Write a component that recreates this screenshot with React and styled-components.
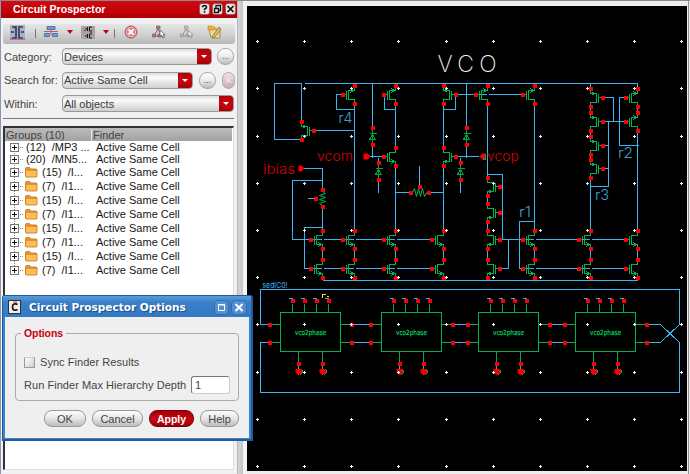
import React from 'react';
import styled, { createGlobalStyle, css } from 'styled-components';

const GlobalStyle = createGlobalStyle`
  * { box-sizing: border-box; }
  body { margin: 0; background: #ececec; font-family: "Liberation Sans", Arial, sans-serif; }
`;

const Screen = styled.main`
  position: relative;
  display: flex;
  width: 690px;
  height: 474px;
  overflow: hidden;
  background: #eeedee;
  border-top: 1px solid #8c8a8c;
  font-size: 11px;
  letter-spacing: 0;
  color: #444;
`;

const Sidebar = styled.aside`
  display: flex;
  flex-direction: column;
  width: 237px;
  border-left: 1px solid #8b98b5;
  background: #f1f1f1;
`;

const TitleBar = styled.header`
  display: flex;
  align-items: center;
  height: 17px;
  padding: 0 1px 2px 12px;
  background: linear-gradient(#d00a10, #c30008 60%, #a80006);
  color: #fff;
  font-weight: bold;
  font-size: 10.5px;
  letter-spacing: 0.05px;
`;

const TitleText = styled.span`
  flex: 1;
  white-space: nowrap;
`;

const TitleIcons = styled.div`
  display: flex;
  gap: 2px;
`;

const ToolBar = styled.div`
  display: flex;
  height: 20px;
  margin: 6px 2px 0 2px;
  border-radius: 3px;
  background: linear-gradient(#e6e6e6, #d2d2d2 50%, #b7b7b7);
`;

const Form = styled.div`
  display: flex;
  flex-direction: column;
  gap: 6.5px;
  padding: 4px 2px 0 3px;
`;

const FormRow = styled.div`
  display: flex;
  align-items: center;
  height: 17px;
`;

const Label = styled.label`
  width: 58px;
  white-space: nowrap;
`;

const Combo = styled.div`
  display: flex;
  align-items: center;
  width: ${(p) => p.$width}px;
  height: 17px;
  padding-left: 1px;
  border: 1px solid #999;
  border-radius: 4px;
  background: linear-gradient(#dedede, #fafafa 30%, #e8e8e8 60%, #cfcfcf);
  overflow: hidden;
  color: #3a3a3a;
  span { flex: 1; }
`;

const ComboArrow = styled.i`
  display: flex;
  align-items: center;
  justify-content: center;
  width: 14px;
  height: 17px;
  background: linear-gradient(#ad0008, #c80610 50%, #a00006);
  &::after {
    content: '';
    border: 3px solid transparent;
    border-top: 3px solid #fff;
    border-bottom: 0;
  }
`;

const RoundButton = styled.button`
  width: ${(p) => p.$width || 17}px;
  height: 17px;
  margin-left: ${(p) => p.$gap}px;
  padding: 0;
  border: 1px solid #aaa;
  border-radius: 8px;
  background: ${(p) => (p.$faded ? 'linear-gradient(#eee2e3, #c7aaae)' : 'linear-gradient(#fff, #eee 45%, #bbb)')};
  color: ${(p) => (p.$faded ? '#f4e6e8' : '#555')};
  font: ${(p) => (p.$faded ? 'bold 11px/14px' : '9px/13px')} "Liberation Sans", Arial, sans-serif;
`;

const Divider = styled.hr`
  width: 231px;
  height: 1px;
  margin: 6px 2px 7px 2px;
  border: 0;
  background: #777;
`;

const Tree = styled.section`
  flex: 1;
  margin: 0 3px 4px 2px;
  border: 1px solid #777;
  border-top: 2px solid #333;
  border-left: 2px solid #333;
  border-right-color: #ddd;
  border-bottom-color: #ddd;
  background: #fff;
  color: #161616;
`;

const TreeHeader = styled.div`
  display: flex;
  align-items: center;
  height: 13px;
  margin-right: 1px;
  background: linear-gradient(#bcbcbc, #a2a2a2);
  color: #444;
`;

const HeaderCell = styled.span`
  width: ${(p) => p.$width}px;
  padding-left: ${(p) => p.$pad}px;
  white-space: nowrap;
  ${(p) => p.$ruled && css`border-left: 1px solid #e8e8e8;`}
`;

const TreeRow = styled.div`
  display: flex;
  align-items: center;
  height: ${(p) => p.$height}px;
  padding-left: 4px;
  white-space: pre;
`;

const GroupText = styled.span`
  width: ${(p) => p.$width}px;
  padding-left: 3px;
`;

const Splitter = styled.div`
  width: 10px;
  border-left: 1px solid #b5b5bb;
  border-right: 4px solid #f5f5f5;
  background: linear-gradient(90deg, #d4d4d9, #c4c4ca);
`;

const CanvasFrame = styled.section`
  width: 442px;
  padding-top: 5px;
  border-right: 1px solid #8f8f8f;
  svg { display: block; }
`;

const Dialog = styled.section`
  position: absolute;
  left: 2px;
  top: 294px;
  display: flex;
  flex-direction: column;
  width: 251px;
  height: 146px;
  border: 1px solid #225a9e;
  border-right-width: 2px;
  border-bottom-width: 2px;
  border-radius: 3px 3px 0 0;
  background: #3c83cc;
`;

const DialogTitle = styled.header`
  display: flex;
  align-items: center;
  height: 21px;
  padding: 1px 5px 0 5px;
  background: linear-gradient(#5b9bd9, #3a80c8 30%, #3379c1);
  color: #fff;
  font: bold 10.5px "DejaVu Sans", sans-serif;
  letter-spacing: 0;
  text-shadow: 1px 1px 1px #1b4c87;
`;

const DialogTitleText = styled.h1`
  flex: 1;
  margin: 0 0 0 7px;
  font: inherit;
  white-space: nowrap;
`;

const WindowButton = styled.svg`
  margin-left: 4px;
  border-radius: 3px;
  background: #568fd0;
  outline: 1px solid #2f6eb4;
`;

const DialogBody = styled.div`
  flex: 1;
  display: flex;
  flex-direction: column;
  margin: 0 2px 1px 2px;
  padding: 15px 10px 0 10px;
  background: #efefef;
`;

const OptionsBox = styled.fieldset`
  display: flex;
  flex-direction: column;
  height: 69px;
  margin: 0;
  padding: 0 8px 0 8px;
  border: 1px solid #aaa;
  border-radius: 4px;
`;

const Legend = styled.legend`
  height: 3px;
  margin-left: -3px;
  padding: 0 3px;
  color: #c8000d;
  font-weight: bold;
  font-size: 10.5px;
  line-height: 3px;
  letter-spacing: -0.1px;
`;

const OptionRow = styled.div`
  display: flex;
  align-items: center;
  height: ${(p) => p.$height}px;
  margin-top: ${(p) => p.$top}px;
  letter-spacing: 0.05px;
  white-space: nowrap;
`;

const CheckBox = styled.i`
  width: 11px;
  height: 11px;
  margin-right: 5px;
  border: 1px solid #999;
  border-top-color: #ccc;
  border-radius: 1px;
  background: linear-gradient(135deg, #fff, #ccc);
`;

const DepthInput = styled.span`
  width: 39px;
  height: 18px;
  margin-left: auto;
  padding: 2px 3px;
  border: 1px solid #ccc;
  border-top: 1px solid #777;
  border-left: 1px solid #777;
  border-radius: 3px;
  background: #fff;
`;

const ButtonRow = styled.div`
  display: flex;
  justify-content: flex-end;
  gap: 6px;
  margin-top: 9px;
`;

const PushButton = styled.button`
  width: ${(p) => p.$width}px;
  height: 17px;
  padding: 0;
  border: 1px solid ${(p) => (p.$primary ? '#7c0006' : '#999')};
  border-radius: 8px;
  background: ${(p) => (p.$primary ? 'linear-gradient(#a00008, #c50812 50%, #a00006)' : 'linear-gradient(#fdfdfd, #e9e9e9 45%, #bdbdbd)')};
  color: ${(p) => (p.$primary ? '#fff' : '#444')};
  font: ${(p) => (p.$primary ? 'bold 10.5px' : '11px')}/14px "Liberation Sans", Arial, sans-serif;
`;

function TitleIcon({ kind }) {
  return (
    <svg width="11" height="12" viewBox="0 0 11 12">
      <rect x="0.5" y="0.5" width="10" height="11" rx="2.5" fill="#e5e5e5" stroke="#8b3b3d" strokeWidth="0.5" />
      {kind === 'help' && <path d="M3.5 4.2Q3.5 2.5 5.5 2.5T7.5 4.2Q7.5 5.2 5.5 6.2V7.3M5.5 8.3V9.8" fill="none" stroke="#111" strokeWidth="1.6" />}
      {kind === 'float' && <path d="M4 5V2.5H8.5V7.5H7M2.5 5.5H6.5V9.5H2.5Z" fill="none" stroke="#111" strokeWidth="1.3" />}
      {kind === 'close' && <path d="M2.5 3L8.5 9M8.5 3L2.5 9" stroke="#111" strokeWidth="1.7" />}
    </svg>
  );
}

function Cursor({ x, y }) {
  return <path transform={`translate(${x} ${y})`} d="M0 0V6.5L1.6 5.2L3 8L4.3 7.3L3 4.8H5.2Z" fill="#fff" stroke="#444" strokeWidth="0.7" />;
}

function ToolIcons() {
  return (
    <svg width="232" height="20" viewBox="3 23 232 20">
      <rect x="10" y="24" width="15" height="15" fill="#a5b3cc" />
      <path d="M12 26H16V37H12M23 26H19V37H23M11 31H14M21 31H24" fill="none" stroke="#2c354e" strokeWidth="1.6" />
      <path d="M12 25L15 28M22 25L19 28M10 38H25" stroke="#b34d5c" />
      <path d="M35.5 28V37M114.5 28V37" stroke="#777" />
      <path d="M44 30.5H58M51 27V34" stroke="#b85b60" />
      <path d="M47 25.5H55V28.5H47ZM44.5 32.5H49.5V35.5H44.5ZM52.5 32.5H57.5V35.5H52.5Z" fill="#7999cf" stroke="#5374ac" />
      <path d="M67 29H73L70 33ZM103 29H109L106 33Z" fill="#c4000c" />
      <rect x="81" y="25" width="14" height="13" fill="#a4a4a4" />
      <path d="M87.5 26V30M89.5 26V30M85 28H87.5M92 26H89.5M92 30H89.5M87.5 33V37M89.5 33V37M85 35H87.5M92 33H89.5M92 37H89.5" stroke="#171717" fill="none" />
      <path d="M84 29.5H86M90 31.5H92" stroke="#f02020" />
      <circle cx="131" cy="31" r="6" fill="#dc7880" stroke="#b84c56" />
      <circle cx="131" cy="31" r="4.7" fill="none" stroke="#f0c8ca" />
      <path d="M128.5 28.5L133.5 33.5M133.5 28.5L128.5 33.5" stroke="#fff" strokeWidth="2" />
      <path d="M158 28L154 35M158 28L162 35M154 35H162" stroke="#665" fill="none" />
      <path d="M156.5 25H160V28H156.5ZM152.5 33H155.5V36H152.5ZM158 33H161V36H158Z" fill="#b5786e" stroke="#7a625c" strokeWidth="0.7" />
      <Cursor x={160} y={29} />
      <g opacity="0.55">
        <path d="M186 28L182 35M186 28L190 35M182 35H190" stroke="#665" fill="none" />
        <path d="M184.5 25H188V28H184.5ZM180.5 33H183.5V36H180.5ZM186 33H189V36H186Z" fill="#b59a96" stroke="#7a6a68" strokeWidth="0.7" />
        <Cursor x={188} y={29} />
      </g>
      <path d="M209 28H220V37H211Z" fill="#eadc9a" stroke="#a39048" />
      <path d="M208 25H212L213 26H215V29H208Z" fill="#f3ae3d" stroke="#c18a30" strokeWidth="0.6" />
      <path d="M212 36L219 26L221 28L214 37Z" fill="#e7c64c" stroke="#66594a" strokeWidth="0.7" />
    </svg>
  );
}

function Expander({ first, last, height }) {
  const c = height / 2;
  return (
    <svg width="14" height={height} viewBox={`0 0 14 ${height}`} shapeRendering="crispEdges">
      <path d={`M5.5 ${first ? c : 0}V${last ? c : height}`} stroke="#777" strokeDasharray="1 1" />
      <path d={`M9 ${c + 0.5}H14`} stroke="#888" strokeDasharray="1 1" />
      <rect x="1.5" y={c - 3.5} width="8" height="8" fill="#fff" stroke="#777" />
      <path d={`M3 ${c + 0.5}H8M5.5 ${c - 2}V${c + 3}`} stroke="#111" />
    </svg>
  );
}

function Folder() {
  return (
    <svg width="16" height="12" viewBox="0 0 15 12">
      <path d="M2 2.5Q2 1.5 3 1.5H6L7.5 3H12.5Q13.5 3 13.5 4V10Q13.5 11 12.5 11H3Q2 11 2 10Z" fill="#e8932c" stroke="#bd7422" strokeWidth="0.8" />
      <path d="M2.6 5H13V9.8Q13 10.5 12 10.5H3.5Q2.6 10.5 2.6 9.8Z" fill="#fbbd58" />
    </svg>
  );
}

const GROUPS = [
  ['(12)  /MP3 ...', false], ['(20)  /MN5...', false],
  ['(15)  /I...', true], ['(7)  /I1...', true], ['(15)  /I...', true], ['(7)  /I1...', true],
  ['(15)  /I...', true], ['(7)  /I1...', true], ['(15)  /I...', true], ['(7)  /I1...', true],
];

const GRID_X = [257, 304, 351, 398, 446, 493, 540, 587, 634, 681];
const GRID_Y = [41, 88, 136, 183, 230, 277, 324, 372, 419, 466];

// x of the channel wire, y of the gate, side of the gate (-1 left, 1 right), arrow at the top or the bottom
const TRANSISTORS = [
  [354, 94, -1, 'p'], [395, 94, -1, 'p'], [443, 94, 1, 'p'], [487, 94, -1, 'p'], [534, 94, -1, 'p'],
  [301, 130, 1, 'p'], [395, 156, -1, 'n'], [443, 156, 1, 'n'],
  ...[97, 121, 145, 168].map((y) => [590, y, 1, 'p']),
  ...[97, 121].map((y) => [637, y, -1, 'p']),
  ...[186, 212, 239, 268].map((y) => [487, y, 1, 'n']),
  ...[322, 354, 395, 443, 534, 590, 637].flatMap((x) => [[x, 239, -1, 'n'], [x, 268, -1, 'n']]),
];

const WIRES = [
  'M301 121V83H274V139H301', 'M304 83H637V277', 'M354 82V280', 'M395 82V280', 'M443 82V280',
  'M487 82V280', 'M534 82V280', 'M590 82V280', 'M322 280H637',
  'M343 94H336V109H354', 'M384 94V109H395', 'M455 94V109H443', 'M455 94H522', 'M313 130H354',
  'M372 82V157', 'M366 156H384', 'M378 157V192', 'M466 82V157', 'M455 156H478', 'M460 157V192',
  'M303 168H322V277', 'M322 180H292V239H431', 'M307 198H315', 'M322 227H304V268H431',
  'M395 192H410M428 192H443M419 165V186', 'M487 174H502V239M499 186H502M499 212H502',
  'M499 239H625M499 268H508V239', 'M534 221H519V268H625',
  'M602 97H613V121M602 121H625M608 121V186H590M602 145H608M602 168H608',
  'M625 97H619V145H638',
];

const BLOCKS = [280, 381, 478, 575];

function Pad({ x, y }) {
  return <rect x={x - 2} y={y - 2} width="4" height="4" fill="#fa0000" />;
}

function Transistor({ x, y, side, kind }) {
  const arrow = kind === 'p' ? y - 4 : y + 5;
  return (
    <g>
      <path d={`M${x} ${y - 7}V${y + 8}`} stroke="#000" strokeWidth="2" />
      <path
        d={`M${x} ${y - 8}V${y - 4}H${x + side * 6}V${y + 5}H${x}V${y + 9}M${x + side * 8} ${y - 4}V${y + 5}`}
        fill="none"
        stroke="#00b455"
      />
      <path d={`M${x + side * 8} ${y}H${x + side * 11}`} stroke="#00b455" />
      <path d={`M${x + side * 4} ${arrow - 2}L${x + side} ${arrow}L${x + side * 4} ${arrow + 2}`} fill="none" stroke="#00b455" />
      <Pad x={x + side * 12 + 0.5} y={y + 0.5} />
      <Pad x={x + 0.5} y={y - 8.5} />
      <Pad x={x + 0.5} y={y + 9.5} />
    </g>
  );
}

function Diode({ x, y }) {
  return (
    <g>
      <path d={`M${x - 3} ${y - 3}H${x + 4}M${x} ${y - 7}V${y + 7}M${x} ${y - 2}L${x - 3} ${y + 3}H${x + 3}Z`} fill="none" stroke="#00a24a" />
      <Pad x={x + 0.5} y={y - 8.5} />
      <Pad x={x + 0.5} y={y + 8.5} />
    </g>
  );
}

function PhaseBlock({ x }) {
  return (
    <g>
      <rect x={x} y="312" width="60" height="39" fill="#000" stroke="#00b455" />
      <path d={`M${x - 11} 324H${x}M${x - 11} 342H${x}M${x + 60} 324H${x + 71}M${x + 60} 342H${x + 71}`} stroke="#00b455" />
      {[12, 24, 36, 48].map((dx) => (
        <g key={dx}>
          <path d={`M${x + dx - 4} 298H${x + dx}V300`} fill="none" stroke="#38aee8" />
          <path d={`M${x + dx} 303V312`} stroke="#00a94f" />
          <Pad x={x + dx + 0.5} y={300.5} />
        </g>
      ))}
      {[18, 42].map((dx) => (
        <g key={dx}>
          <path d={`M${x + dx} 351V363`} stroke="#00a94f" />
          <path d={`M${x + dx} 363V370`} stroke="#38aee8" />
          <Pad x={x + dx + 0.5} y={363.5} />
          <path d={`M${x + dx - 3} 368.5H${x + dx + 3.5}V372L${x + dx} 375L${x + dx - 3} 372Z`} fill="#fa0000" shapeRendering="auto" />
          <path d={`M${x + dx + 4} 369V372L${x + dx + 1} 375`} fill="none" stroke="#00a94f" />
        </g>
      ))}
      {[[-11, 324], [-11, 342], [71, 324], [71, 342]].map(([dx, y]) => <Pad key={`${dx}-${y}`} x={x + dx + 0.5} y={y + 0.5} />)}
      <text x={x + 14.5} y="334" textLength="31" lengthAdjust="spacingAndGlyphs" fontSize="7" fontFamily="DejaVu Sans" fill="#00d862" stroke="#00d862" strokeWidth="0.2" shapeRendering="auto">vco2phase</text>
    </g>
  );
}

const NET_LABELS = [
  ['r4', 338.5, 123, 14], ['r3', 595, 200, 14], ['r2', 618, 158, 15], ['r1', 519, 217, 12],
];
const PIN_LABELS = [['vcom', 317, 161, 36], ['vcop', 487, 161, 32], ['ibias', 263, 173.5, 32]];

function Schematic() {
  return (
    <svg width="440" height="465" viewBox="247 6 440 465" shapeRendering="crispEdges">
      <rect x="247" y="6" width="440" height="465" fill="#000" />
      <g transform="translate(0.5 0.5)">
        <g fill="none" stroke="#38b4f2">
          {WIRES.map((d) => <path key={d} d={d} />)}
          <path d="M260 324V289H679V324L660 342H653M269 324H260M269 342H260V392H679V342L660 324H653" />
          <path d="M351 324H370M351 342H370M452 324H467M452 342H467M549 324H564M549 342H564M646 324H655M646 342H655" />
        </g>
        {TRANSISTORS.map(([x, y, side, kind]) => <Transistor key={`${x}-${y}`} x={x} y={y} side={side} kind={kind} />)}
        <Diode x={372} y={136} />
        <Diode x={466} y={136} />
        <Diode x={378} y={171} />
        <Diode x={460} y={171} />
        <path d="M322 190V206M410 192H428" stroke="#000" strokeWidth="2" />
        <path d="M322 191L325 193L319 195L325 197L319 199L325 201L319 203L322 205M412 192L414 188L416 196L418 188L420 196L422 188L424 196L426 192" fill="none" stroke="#00b455" shapeRendering="auto" />
        {[[322, 189], [322, 206], [315, 198], [410, 192], [428, 192], [419, 186]].map(([x, y]) => <Pad key={`${x}-${y}`} x={x + 0.5} y={y + 0.5} />)}
        <path d="M363 153H367L370 156L367 159H363ZM298 165H301L304 168L301 171H298ZM485 153H482L479 156L482 159H485Z" fill="#fa0000" shapeRendering="auto" />
        <path d="M485 153V159H482" stroke="#00a94f" fill="none" />
        {BLOCKS.map((x) => <PhaseBlock key={x} x={x} />)}
        <path d="M322 297V294H325M326 296H328" fill="none" stroke="#f0e020" />
      </g>
      <g fill="#f4f4f4">
        {GRID_X.flatMap((x) => GRID_Y.map((y) => (
          <path key={`${x}-${y}`} d={`M${x - 1} ${y}h3v1h-3zM${x} ${y - 1}h1v3h-1z`} />
        )))}
      </g>
      <g fontFamily="Inter, sans-serif">
        <text x="437.5" y="72" textLength="59" fontSize="23" fontWeight="200" fill="#eee">VCO</text>
        {NET_LABELS.map(([t, x, y, w]) => <text key={t} x={x} y={y} textLength={w} lengthAdjust="spacingAndGlyphs" fontSize="14.5" fontWeight="300" fill="#3b9fd6">{t}</text>)}
        {PIN_LABELS.map(([t, x, y, w]) => <text key={t} x={x} y={y} textLength={w} lengthAdjust="spacingAndGlyphs" fontSize="13.5" fontWeight="300" fill="#d60000">{t}</text>)}
        <text x="262.5" y="288" textLength="25" lengthAdjust="spacingAndGlyphs" fontSize="8" fill="#3fb6f4">sedIC0!</text>
      </g>
    </svg>
  );
}

function OptionsDialog() {
  return (
    <Dialog>
      <DialogTitle>
        <svg width="14" height="14" viewBox="0 0 14 14">
          <rect x="0.5" y="0.5" width="12" height="13" fill="#eee" stroke="#333" />
          <path d="M9.5 4.5Q8 3.5 6 4Q4.5 4.5 4.5 7T6 10Q8 10.5 9.5 9.5" fill="none" stroke="#111" strokeWidth="1.7" />
          <path d="M5.5 2H9" stroke="#d22" />
        </svg>
        <DialogTitleText>Circuit Prospector Options</DialogTitleText>
        <WindowButton width="13" height="13" viewBox="0 0 13 13"><path d="M3.5 3.5H9.5V9.5H3.5ZM3 4H10" fill="none" stroke="#fff" /></WindowButton>
        <WindowButton width="14" height="13" viewBox="0 0 14 13"><path d="M3.5 3L10.5 10M10.5 3L3.5 10" stroke="#fff" strokeWidth="2" /></WindowButton>
      </DialogTitle>
      <DialogBody>
        <OptionsBox>
          <Legend>Options</Legend>
          <OptionRow $height={14} $top={20}><CheckBox />Sync Finder Results</OptionRow>
          <OptionRow $height={18} $top={7}>Run Finder Max Hierarchy Depth<DepthInput>1</DepthInput></OptionRow>
        </OptionsBox>
        <ButtonRow>
          <PushButton $width={42}>OK</PushButton>
          <PushButton $width={51}>Cancel</PushButton>
          <PushButton $width={45} $primary>Apply</PushButton>
          <PushButton $width={39}>Help</PushButton>
        </ButtonRow>
      </DialogBody>
    </Dialog>
  );
}

export default function App() {
  return (
    <Screen>
      <GlobalStyle />
      <Sidebar>
        <TitleBar>
          <TitleText>Circuit Prospector</TitleText>
          <TitleIcons><TitleIcon kind="help" /><TitleIcon kind="float" /><TitleIcon kind="close" /></TitleIcons>
        </TitleBar>
        <ToolBar><ToolIcons /></ToolBar>
        <Form>
          <FormRow>
            <Label>Category:</Label>
            <Combo $width={150}><span>Devices</span><ComboArrow /></Combo>
            <RoundButton $gap={5}>...</RoundButton>
          </FormRow>
          <FormRow>
            <Label>Search for:</Label>
            <Combo $width={131}><span>Active Same Cell</span><ComboArrow /></Combo>
            <RoundButton $gap={6}>...</RoundButton>
            <RoundButton $gap={6} $width={13} $faded>×</RoundButton>
          </FormRow>
          <FormRow>
            <Label>Within:</Label>
            <Combo $width={172}><span>All objects</span><ComboArrow /></Combo>
          </FormRow>
        </Form>
        <Divider />
        <Tree>
          <TreeHeader>
            <HeaderCell $width={86} $pad={1}>Groups (10)</HeaderCell>
            <HeaderCell $width={100} $pad={1} $ruled>Finder</HeaderCell>
          </TreeHeader>
          {GROUPS.map(([name, folder], i) => (
            <TreeRow key={i} $height={folder ? 14 : 12}>
              <Expander first={i === 0} last={i === GROUPS.length - 1} height={folder ? 14 : 12} />
              {folder && <Folder />}
              <GroupText $width={folder ? 57 : 73}>{name}</GroupText>
              <span>Active Same Cell</span>
            </TreeRow>
          ))}
        </Tree>
      </Sidebar>
      <Splitter />
      <CanvasFrame><Schematic /></CanvasFrame>
      <OptionsDialog />
    </Screen>
  );
}
